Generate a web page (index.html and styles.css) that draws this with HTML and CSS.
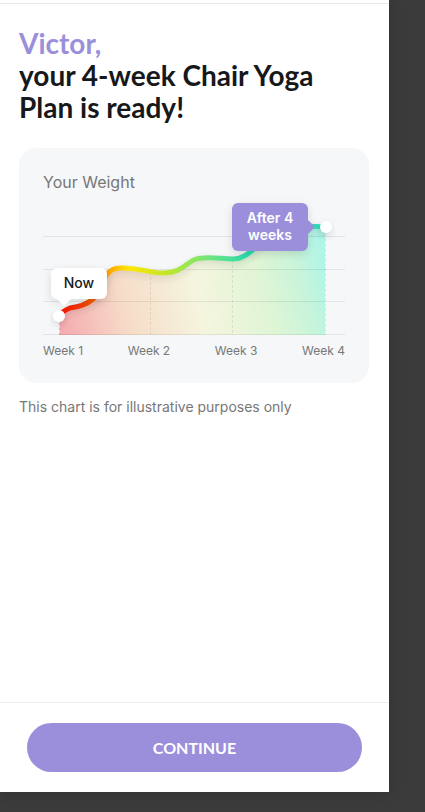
FILE: index.html
```html
<!DOCTYPE html>
<html lang="en">
<head>
<meta charset="utf-8">
<meta name="viewport" content="width=device-width, initial-scale=1">
<title>Your Chair Yoga Plan</title>
<link rel="stylesheet" href="styles.css">
</head>
<body>
<div class="page">
  <main class="content">
    <h1 class="headline"><span class="name">Victor,</span><br>your 4-week Chair Yoga Plan is ready!</h1>
    <section class="card">
      <h2 class="card-title">Your Weight</h2>
      <div class="chart">
        <svg class="plot" viewBox="0 0 302 140" aria-hidden="true">
          <defs>
            <linearGradient id="line" gradientUnits="userSpaceOnUse" x1="16" y1="0" x2="283" y2="0">
              <stop offset="0" stop-color="#f51400"/>
              <stop offset="0.07" stop-color="#f03208"/>
              <stop offset="0.14" stop-color="#f56400"/>
              <stop offset="0.19" stop-color="#ffa800"/>
              <stop offset="0.26" stop-color="#ffe600"/>
              <stop offset="0.4" stop-color="#c3e62c"/>
              <stop offset="0.56" stop-color="#72e57c"/>
              <stop offset="0.7" stop-color="#2edcae"/>
              <stop offset="1" stop-color="#2edcb6"/>
            </linearGradient>
            <linearGradient id="area" gradientUnits="userSpaceOnUse" x1="16" y1="130" x2="283" y2="65">
              <stop offset="0" stop-color="#f5a9ae"/>
              <stop offset="0.25" stop-color="#f6dcc8"/>
              <stop offset="0.52" stop-color="#f5f5de"/>
              <stop offset="0.75" stop-color="#e0f5d5"/>
              <stop offset="0.9" stop-color="#c8f4da"/>
              <stop offset="1" stop-color="#aff5e8"/>
            </linearGradient>
            <filter id="soft" x="-20%" y="-50%" width="140%" height="220%">
              <feDropShadow dx="0" dy="3" stdDeviation="3" flood-color="#444" flood-opacity="0.16"/>
            </filter>
          </defs>
          <path fill="url(#area)" d="M16 116C19 112 22 110 27 108C36 107 43 105 50 99C60 88 60 68 77 68C94 67 104 73 121 73C142 73 144 58 160 58C171 57 179 59 190 59C213 59 219 26 261 26C269 26 276 27 283 27V135H16Z"/>
          <path class="grid" d="M0 36.500H302M0 69.500H302M0 101.500H302M0 134.500H302"/>
          <path class="week-line" d="M107.500 72V134M189.500 60V134"/>
          <path class="edge-line" d="M16.500 120V134M282.500 31V134"/>
          <path class="curve" filter="url(#soft)" d="M16 116C19 112 22 110 27 108C36 107 43 105 50 99C60 88 60 68 77 68C94 67 104 73 121 73C142 73 144 58 160 58C171 57 179 59 190 59C213 59 219 26 261 26C269 26 276 27 283 27"/>
          <circle class="dot" filter="url(#soft)" cx="16" cy="116" r="6"/>
          <circle class="dot" filter="url(#soft)" cx="283" cy="27" r="6"/>
        </svg>
        <span class="tip tip-now">Now</span>
        <span class="tip tip-after">After 4 weeks</span>
      </div>
      <div class="weeks"><span>Week 1</span><span>Week 2</span><span>Week 3</span><span>Week 4</span></div>
    </section>
    <p class="note">This chart is for illustrative purposes only</p>
  </main>
  <footer class="footer"><button class="continue" type="button">CONTINUE</button></footer>
</div>
</body>
</html>
```
FILE: styles.css
```css
* { box-sizing: border-box; }

body {
  margin: 0;
  padding: 0 36px 20px 0;
  background: #3b3b3b;
  color: #17181a;
  font-family: Inter, "Liberation Sans", sans-serif;
}

.page {
  display: flex;
  flex-direction: column;
  min-height: calc(100vh - 20px);
  padding-top: 3px;
  background: #fff;
  box-shadow: 0 0 12px rgba(0, 0, 0, 0.2);
}

.content {
  flex: 1;
  padding: 23px 20px 24px 19px;
  border-top: 1px solid #e8e8e8;
}

.headline {
  margin: 0 0 25px;
  font-family: Lato, Inter, sans-serif;
  font-size: 28px;
  font-weight: 700;
  line-height: 32px;
}

.name { color: #9b8fdc; }

.card {
  padding: 24px;
  border-radius: 17px;
  background: #f5f7f9;
}

.card-title {
  margin: 0;
  color: #777;
  font-size: 16px;
  font-weight: 400;
  line-height: 20px;
}

.chart {
  position: relative;
  margin-top: 8px;
}

.plot {
  display: block;
  width: 100%;
  overflow: visible;
}

.grid { fill: none; stroke: #000; stroke-opacity: 0.08; }
.week-line { fill: none; stroke: #000; stroke-opacity: 0.08; stroke-dasharray: 3 2; }
.edge-line { fill: none; stroke: #fff; stroke-opacity: 0.6; stroke-dasharray: 3 2; }
.curve { fill: none; stroke: url(#line); stroke-width: 5; }
.dot { fill: #fff; }

.tip {
  position: absolute;
  border-radius: 6px;
  font-size: 14px;
  text-align: center;
  box-shadow: 0 3px 10px rgba(0, 0, 0, 0.12);
}

.tip::after {
  content: "";
  position: absolute;
  border: 7px solid transparent;
}

.tip-now {
  top: 68px;
  left: 8px;
  width: 56px;
  padding-bottom: 1px;
  background: #fff;
  font-weight: 500;
  line-height: 30px;
}

.tip-now::after {
  top: 100%;
  left: 6px;
  border-top-color: #fff;
}

.tip-after {
  top: 3px;
  right: 37px;
  width: 76px;
  padding: 6px 10px 8px;
  background: #9b8fdc;
  color: #fff;
  font-weight: 600;
  line-height: 17px;
}

.tip-after::after {
  top: 17px;
  left: 100%;
  border-left-color: #9b8fdc;
}

.weeks {
  display: flex;
  justify-content: space-between;
  margin-top: 3px;
  color: #777;
  font-size: 12px;
  line-height: 16px;
}

.note {
  margin: 16px 0 0;
  color: #777;
  font-size: 14px;
  line-height: 16px;
}

.footer {
  padding: 20px 27px;
  border-top: 1px solid #ececec;
}

.continue {
  display: block;
  width: 100%;
  height: 49px;
  border: 0;
  border-radius: 25px;
  background: #9b8fdc;
  color: #fff;
  font-family: Lato, Inter, sans-serif;
  font-size: 16px;
  font-weight: 700;
}
```
